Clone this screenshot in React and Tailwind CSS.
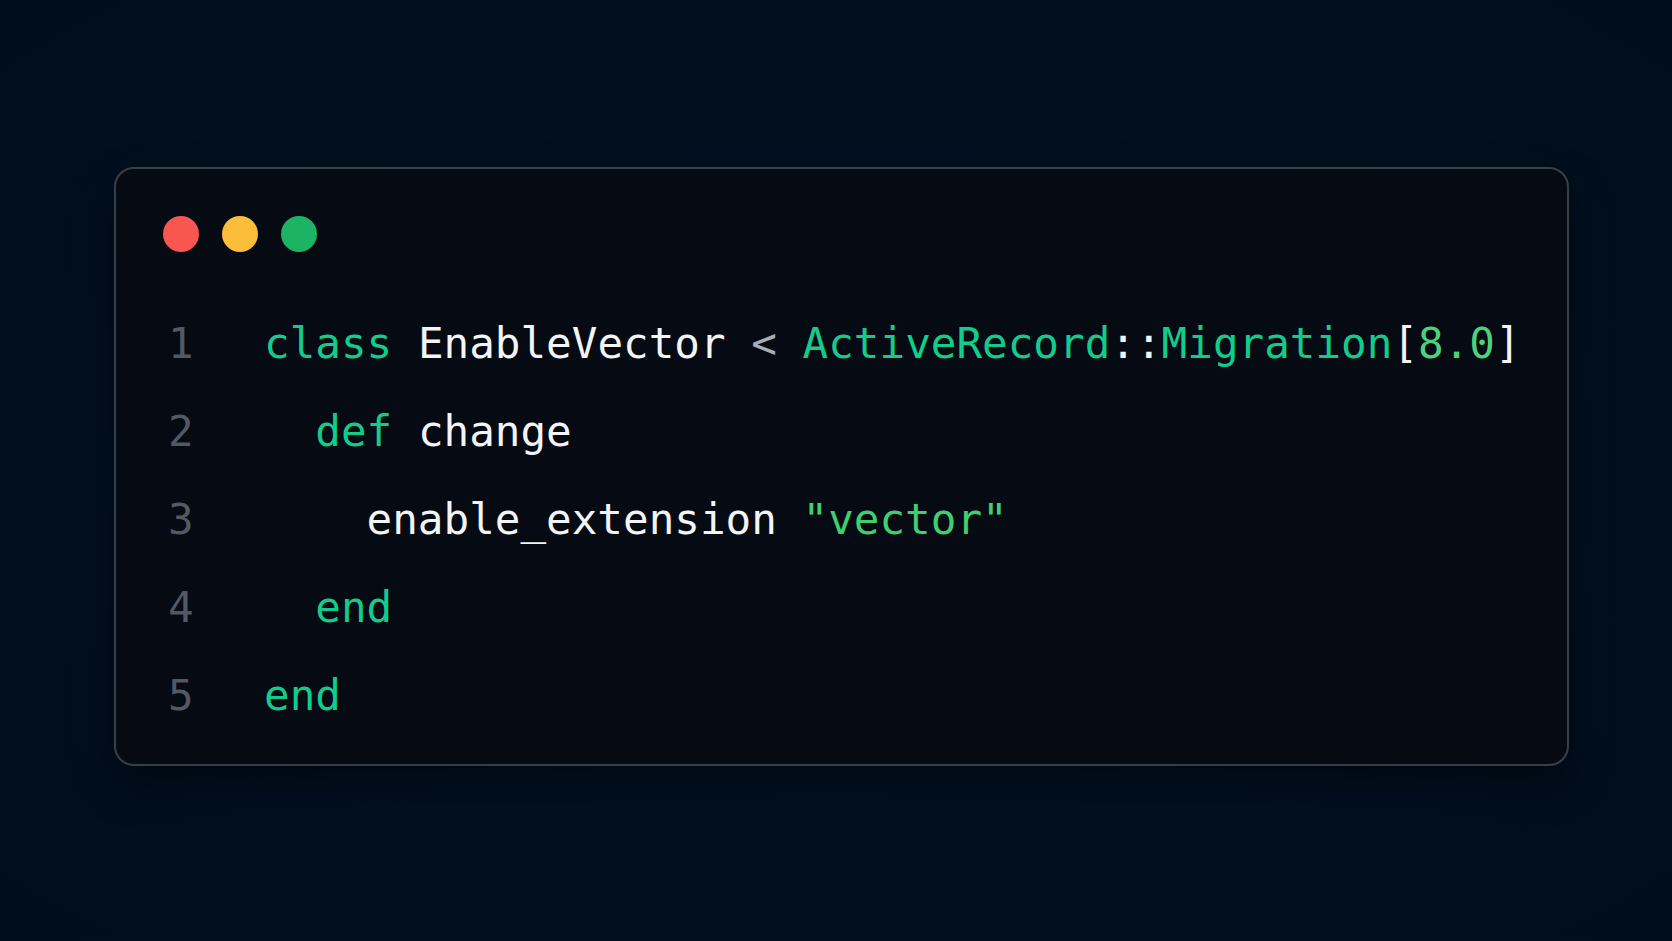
import React from 'react';

// Token colours for the snippet
const kw = 'text-[#12cc8e]';
const id = 'text-[#f2f4f5]';
const op = 'text-[#a9adb3]';
const num = 'text-[#4dd17c]';
const str = 'text-[#40cf70]';

const lines = [
    [
        ['class', kw], [' '], ['EnableVector', id], [' '], ['<', op], [' '],
        ['ActiveRecord', kw], ['::', id], ['Migration', kw], ['[', id], ['8.0', num], [']', id],
    ],
    [['  '], ['def', kw], [' '], ['change', id]],
    [['    '], ['enable_extension', id], [' '], ['"vector"', str]],
    [['  '], ['end', kw]],
    [['end', kw]],
];

const Dot = ({ color }) => <span className={`block h-9 w-9 rounded-full ${color}`} />;

const CodeLine = ({ n, tokens }) => (
    <div className="flex h-[88px] items-start leading-[88px] whitespace-pre">
        <span className="w-[96px] shrink-0 text-[#535963]">{n}</span>
        <span>
            {tokens.map(([t, c], i) => (
                <span key={i} className={c || ''}>{t}</span>
            ))}
        </span>
    </div>
);

const App = () => {
    return (
        <div className="min-h-[941px] w-full bg-[radial-gradient(ellipse_at_50%_50%,#021124_0%,#010f1f_60%,#000d1b_100%)] pl-[114px] pt-[167px]">
            <div className="w-[1455px] h-[599px] rounded-[20px] border-2 border-[#3a3f47] bg-[#050a13] pt-[47px] shadow-[0_20px_40px_rgba(0,0,0,0.35)]">
                {/* window controls */}
                <div className="flex gap-[23px] pl-[47px]">
                    <Dot color="bg-[#f8564f]" />
                    <Dot color="bg-[#fbbd3a]" />
                    <Dot color="bg-[#1db364]" />
                </div>

                {/* code */}
                <div className="mt-[47px] pl-[52px] text-[42.6px] font-['DejaVu_Sans_Mono',monospace]">
                    {lines.map((tokens, i) => (
                        <CodeLine key={i} n={i + 1} tokens={tokens} />
                    ))}
                </div>
            </div>
        </div>
    );
};

export default App;
